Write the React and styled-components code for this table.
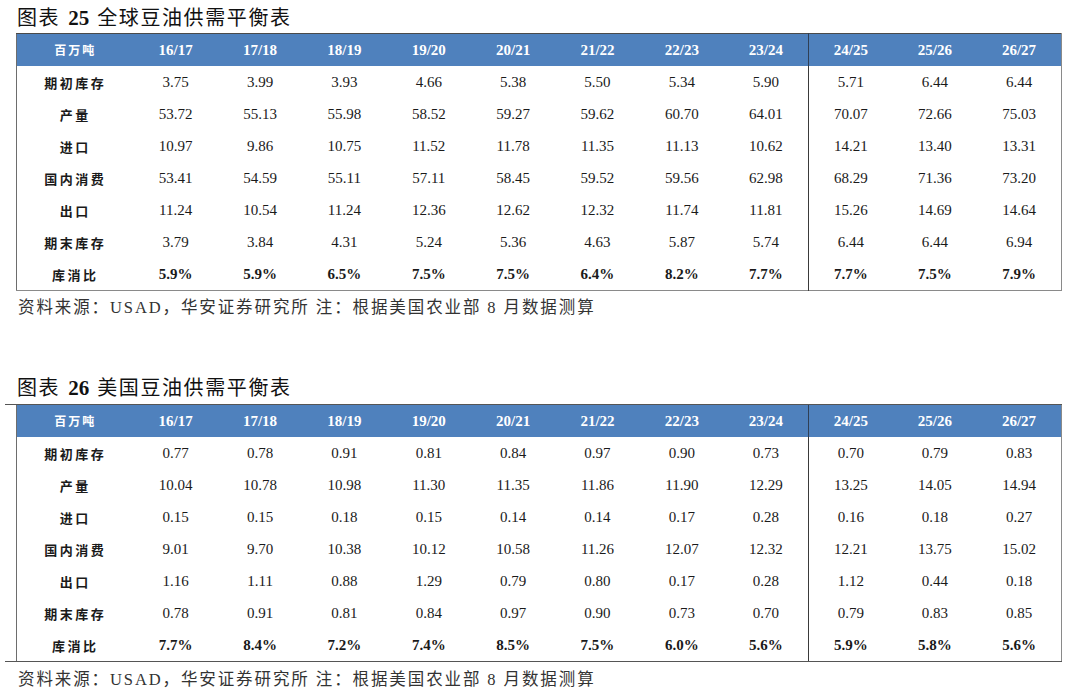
import React from 'react';
import styled, { createGlobalStyle } from 'styled-components';

const GlobalStyle = createGlobalStyle`
    body {
        margin: 0;
        background: #fff;
        font-family: "Liberation Serif", "Noto Sans CJK SC", serif;
        color: #1a1a1a;
    }
`;

const Page = styled.div`
    width: 1080px;
    height: 694px;
    overflow: hidden;
    display: flex;
    flex-direction: column;
`;

const Title = styled.div`
    height: ${props => props.h}px;
    line-height: ${props => props.h}px;
    padding-left: 17px;
    font-size: 20px;
    font-family: "Noto Sans CJK SC", serif;
    color: #111;
    letter-spacing: 1.6px;
    margin-top: ${props => props.gap || 0}px;

    b {
        font-family: "Liberation Serif", serif;
        font-size: 21px;
        margin: 0 8px;
        letter-spacing: 0;
    }
`;

const Wrap = styled.div`
    width: ${props => props.wide ? 1057 : 1046}px;
    margin-left: ${props => props.wide ? 5 : 16}px;
    padding-left: ${props => props.wide ? 11 : 0}px;
    box-sizing: border-box;
    border-top: ${props => props.wide ? '1px solid #555' : 'none'};
    border-bottom: ${props => props.wide ? '1px solid #555' : 'none'};
`;

const Table = styled.table`
    width: 1046px;
    table-layout: fixed;
    border-collapse: collapse;
    border-left: 1px solid #6d6d6d;
    border-right: 1px solid #8a8a8a;
    border-top: ${props => props.wide ? 'none' : '1px solid #4a4a4a'};
    border-bottom: ${props => props.wide ? 'none' : '1px solid #8a8a8a'};
`;

const HeadCell = styled.th`
    height: 32px;
    padding: 0;
    background: #4f81bd;
    color: #fff;
    font-weight: 700;
    font-size: 15px;
    text-align: center;
    border-right: ${props => props.divider ? '1px solid #2f3f55' : 'none'};
`;

const UnitText = styled.span`
    font-family: "Noto Sans CJK SC", serif;
    font-size: 12px;
    letter-spacing: 2px;
    font-weight: 700;
`;

const Label = styled.td`
    height: 32px;
    padding: 0;
    text-align: center;
    font-family: "Noto Sans CJK SC", serif;
    font-weight: 700;
    font-size: 13px;
    letter-spacing: 2.5px;
    color: #1a1a1a;
`;

const Cell = styled.td`
    height: 32px;
    padding: 0;
    text-align: center;
    font-size: 15px;
    font-weight: ${props => props.strong ? 700 : 400};
    color: #1a1a1a;
    border-right: ${props => props.divider ? '1px solid #3a3a3a' : 'none'};
`;

const Source = styled.div`
    height: ${props => props.h}px;
    line-height: ${props => props.h}px;
    padding-left: 18px;
    font-size: 16.5px;
    color: #333;
    font-family: "Liberation Serif", "Noto Sans CJK SC", serif;
    letter-spacing: 1.9px;
`;

const years = ['16/17', '17/18', '18/19', '19/20', '20/21', '21/22', '22/23', '23/24', '24/25', '25/26', '26/27'];
const labels = ['期初库存', '产量', '进口', '国内消费', '出口', '期末库存', '库消比'];

const worldData = [
    ['3.75', '3.99', '3.93', '4.66', '5.38', '5.50', '5.34', '5.90', '5.71', '6.44', '6.44'],
    ['53.72', '55.13', '55.98', '58.52', '59.27', '59.62', '60.70', '64.01', '70.07', '72.66', '75.03'],
    ['10.97', '9.86', '10.75', '11.52', '11.78', '11.35', '11.13', '10.62', '14.21', '13.40', '13.31'],
    ['53.41', '54.59', '55.11', '57.11', '58.45', '59.52', '59.56', '62.98', '68.29', '71.36', '73.20'],
    ['11.24', '10.54', '11.24', '12.36', '12.62', '12.32', '11.74', '11.81', '15.26', '14.69', '14.64'],
    ['3.79', '3.84', '4.31', '5.24', '5.36', '4.63', '5.87', '5.74', '6.44', '6.44', '6.94'],
    ['5.9%', '5.9%', '6.5%', '7.5%', '7.5%', '6.4%', '8.2%', '7.7%', '7.7%', '7.5%', '7.9%'],
];

const usData = [
    ['0.77', '0.78', '0.91', '0.81', '0.84', '0.97', '0.90', '0.73', '0.70', '0.79', '0.83'],
    ['10.04', '10.78', '10.98', '11.30', '11.35', '11.86', '11.90', '12.29', '13.25', '14.05', '14.94'],
    ['0.15', '0.15', '0.18', '0.15', '0.14', '0.14', '0.17', '0.28', '0.16', '0.18', '0.27'],
    ['9.01', '9.70', '10.38', '10.12', '10.58', '11.26', '12.07', '12.32', '12.21', '13.75', '15.02'],
    ['1.16', '1.11', '0.88', '1.29', '0.79', '0.80', '0.17', '0.28', '1.12', '0.44', '0.18'],
    ['0.78', '0.91', '0.81', '0.84', '0.97', '0.90', '0.73', '0.70', '0.79', '0.83', '0.85'],
    ['7.7%', '8.4%', '7.2%', '7.4%', '8.5%', '7.5%', '6.0%', '5.6%', '5.9%', '5.8%', '5.6%'],
];

function Balance({ data, wide }) {
    return (
        <Wrap wide={wide}>
            <Table wide={wide}>
                <colgroup>
                    <col style={{ width: 117 }} />
                    {years.map(y => <col key={y} />)}
                </colgroup>
                <thead>
                    <tr>
                        <HeadCell><UnitText>百万吨</UnitText></HeadCell>
                        {years.map((y, i) => (
                            <HeadCell key={y} divider={i === 7}>{y}</HeadCell>
                        ))}
                    </tr>
                </thead>
                <tbody>
                    {data.map((row, r) => (
                        <tr key={labels[r]}>
                            <Label>{labels[r]}</Label>
                            {row.map((v, i) => (
                                <Cell key={i} divider={i === 7} strong={r === 6}>{v}</Cell>
                            ))}
                        </tr>
                    ))}
                </tbody>
            </Table>
        </Wrap>
    );
}

const sourceText = '资料来源：USAD，华安证券研究所 注：根据美国农业部 8 月数据测算';

export default function App() {
    return (
        <Page>
            <GlobalStyle />
            <Title h={33}>图表<b>25</b>全球豆油供需平衡表</Title>
            <Balance data={worldData} />
            <Source h={34}>{sourceText}</Source>
            <Title h={34} gap={45}>图表<b>26</b>美国豆油供需平衡表</Title>
            <Balance data={usData} wide />
            <Source h={36}>{sourceText}</Source>
        </Page>
    );
}
